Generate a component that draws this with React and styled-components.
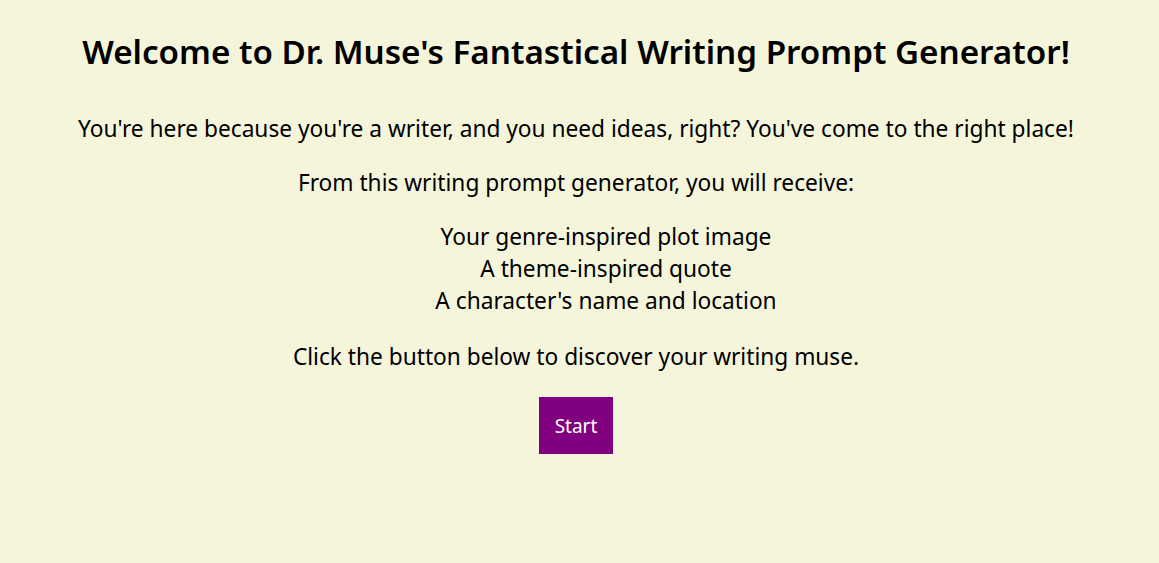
import React from 'react';
import styled, { createGlobalStyle } from 'styled-components';

const GlobalStyle = createGlobalStyle`
  html, body {
    margin: 0;
    padding: 0;
    background: #f5f5dc;
  }
  body {
    font-family: 'Noto Sans', 'Open Sans', sans-serif;
    color: #000;
  }
`;

const Page = styled.main`
  display: flex;
  flex-direction: column;
  align-items: center;
  text-align: center;
  padding: 29px 7px 0 0;
  min-height: 563px;
  box-sizing: border-box;
`;

const Title = styled.h1`
  font-size: 33.2px;
  font-weight: 600;
  line-height: 46px;
  margin: 0 0 38px;
`;

const Text = styled.p`
  font-size: 22.7px;
  line-height: 32px;
  margin: 0 0 ${({ gap }) => gap || 22}px;
`;

const List = styled.ul`
  list-style: none;
  align-self: stretch;
  padding: 0 0 0 60px;
  margin: 0 0 24px;
  font-size: 22.7px;
  line-height: 32px;
`;

const StartButton = styled.button`
  width: 74px;
  height: 57px;
  padding: 0;
  border: none;
  background: #800080;
  color: #fff;
  font-family: inherit;
  font-size: 19px;
  cursor: pointer;
`;

export default function App() {
  return (
    <>
      <GlobalStyle />
      <Page>
        <Title>Welcome to Dr. Muse's Fantastical Writing Prompt Generator!</Title>
        <Text>You're here because you're a writer, and you need ideas, right? You've come to the right place!</Text>
        <Text>From this writing prompt generator, you will receive:</Text>
        <List>
          <li>Your genre-inspired plot image</li>
          <li>A theme-inspired quote</li>
          <li>A character's name and location</li>
        </List>
        <Text gap={24}>Click the button below to discover your writing muse.</Text>
        <StartButton>Start</StartButton>
      </Page>
    </>
  );
}
